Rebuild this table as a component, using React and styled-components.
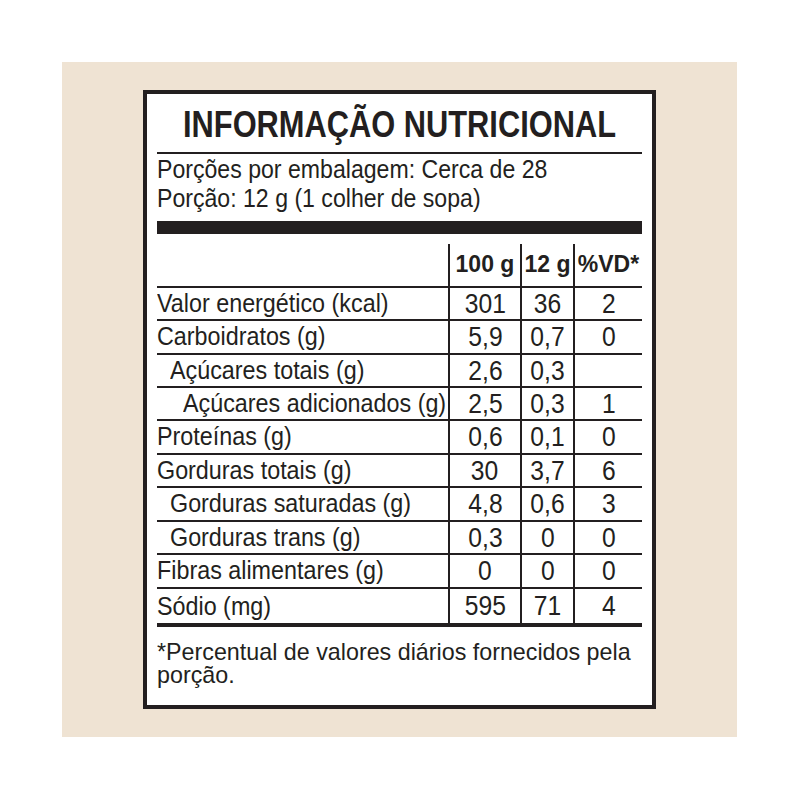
import React from 'react';
import styled, { createGlobalStyle } from 'styled-components';

const ink = '#231f20';

const Global = createGlobalStyle`
  html, body { margin: 0; padding: 0; background: #ffffff; }
  body {
    font-family: "Liberation Sans", Arial, Helvetica, sans-serif;
    color: ${ink};
  }
`;

const Page = styled.div`
  width: 800px;
  height: 800px;
  box-sizing: border-box;
  padding: 62px 63px 63px 62px;
  display: flex;
`;

const Backdrop = styled.div`
  flex: 1;
  background: #efe3d3;
  display: flex;
  justify-content: center;
  align-items: flex-start;
  padding-top: 28px;
`;

const Label = styled.section`
  width: 513px;
  height: 619px;
  box-sizing: border-box;
  border: 4px solid ${ink};
  background: #ffffff;
  padding: 10px 10px 0 10px;
  display: flex;
  flex-direction: column;
`;

/* condensed type: the label is set in a narrow grotesque */
const Title = styled.h1`
  margin: 0 -40px 8px -40px;
  font-size: 37.3px;
  line-height: 40px;
  font-weight: 700;
  text-align: center;
  white-space: nowrap;
  transform: scaleX(0.826);
  transform-origin: center;
`;

const Rule = styled.div`
  height: ${(p) => p.$h}px;
  background: ${ink};
  margin-top: ${(p) => p.$mt || 0}px;
  flex-shrink: 0;
`;

const Serving = styled.div`
  padding-top: 1px;
  font-size: 25px;
  line-height: 28.7px;
  white-space: nowrap;
  transform: scaleX(0.924);
  transform-origin: left;
`;

const Table = styled.div`
  margin-top: 10px;
  display: flex;
  flex-direction: column;
`;

const Row = styled.div`
  display: grid;
  grid-template-columns: 291px 72px 53px 69px;
  box-sizing: border-box;
  height: ${(p) => p.$h}px;
  border-bottom: ${(p) => p.$rule}px solid ${ink};
`;

const NameCell = styled.div`
  font-size: 26.5px;
  line-height: ${(p) => p.$lh}px;
  padding-left: ${(p) => p.$indent * 13}px;
  white-space: nowrap;
`;

const ValueCell = styled.div`
  box-sizing: border-box;
  border-left: 2px solid ${ink};
  text-align: center;
  font-size: 28px;
  line-height: ${(p) => p.$lh}px;
  white-space: nowrap;
`;

const HeadCell = styled.div`
  box-sizing: border-box;
  border-left: 2px solid ${ink};
  text-align: center;
  font-weight: 700;
  font-size: 23px;
  line-height: 41.7px;
  white-space: nowrap;
`;

const Narrow = styled.span`
  display: inline-block;
  transform: scaleX(${(p) => p.$sx});
  transform-origin: ${(p) => p.$origin || 'left'};
`;

const Footnote = styled.p`
  margin: 12.3px 0 0 0;
  font-size: 24px;
  line-height: 23.4px;
  white-space: nowrap;
  transform: scaleX(0.97);
  transform-origin: left;
`;

const rows = [
  { name: 'Valor energético (kcal)', indent: 0, v: ['301', '36', '2'] },
  { name: 'Carboidratos (g)', indent: 0, v: ['5,9', '0,7', '0'] },
  { name: 'Açúcares totais (g)', indent: 1, v: ['2,6', '0,3', ''] },
  { name: 'Açúcares adicionados (g)', indent: 2, v: ['2,5', '0,3', '1'] },
  { name: 'Proteínas (g)', indent: 0, v: ['0,6', '0,1', '0'] },
  { name: 'Gorduras totais (g)', indent: 0, v: ['30', '3,7', '6'] },
  { name: 'Gorduras saturadas (g)', indent: 1, v: ['4,8', '0,6', '3'] },
  { name: 'Gorduras trans (g)', indent: 1, v: ['0,3', '0', '0'] },
  { name: 'Fibras alimentares (g)', indent: 0, v: ['0', '0', '0'] },
  { name: 'Sódio (mg)', indent: 0, v: ['595', '71', '4'] },
];

export default function App() {
  return (
    <>
      <Global />
      <Page>
        <Backdrop>
          <Label>
            <Title>INFORMAÇÃO NUTRICIONAL</Title>
            <Rule $h={2} />
            <Serving>
              Porções por embalagem: Cerca de 28
              <br />
              Porção: 12 g (1 colher de sopa)
            </Serving>
            <Rule $h={13} $mt={8.6} />
            <Table>
              <Row $h={43.7} $rule={2}>
                <div />
                <HeadCell>100 g</HeadCell>
                <HeadCell>12 g</HeadCell>
                <HeadCell>%VD*</HeadCell>
              </Row>
              {rows.map((r, i) => {
                const last = i === rows.length - 1;
                const h = last ? 38.6 : 33.44;
                const rule = last ? 4 : 2;
                const lh = h - rule;
                return (
                  <Row key={r.name} $h={h} $rule={rule}>
                    <NameCell $indent={r.indent} $lh={lh}>
                      <Narrow $sx={0.88}>{r.name}</Narrow>
                    </NameCell>
                    {r.v.map((val, j) => (
                      <ValueCell key={j} $lh={lh}>
                        <Narrow $sx={0.88} $origin="center">{val}</Narrow>
                      </ValueCell>
                    ))}
                  </Row>
                );
              })}
            </Table>
            <Footnote>
              *Percentual de valores diários fornecidos pela
              <br />
              porção.
            </Footnote>
          </Label>
        </Backdrop>
      </Page>
    </>
  );
}
